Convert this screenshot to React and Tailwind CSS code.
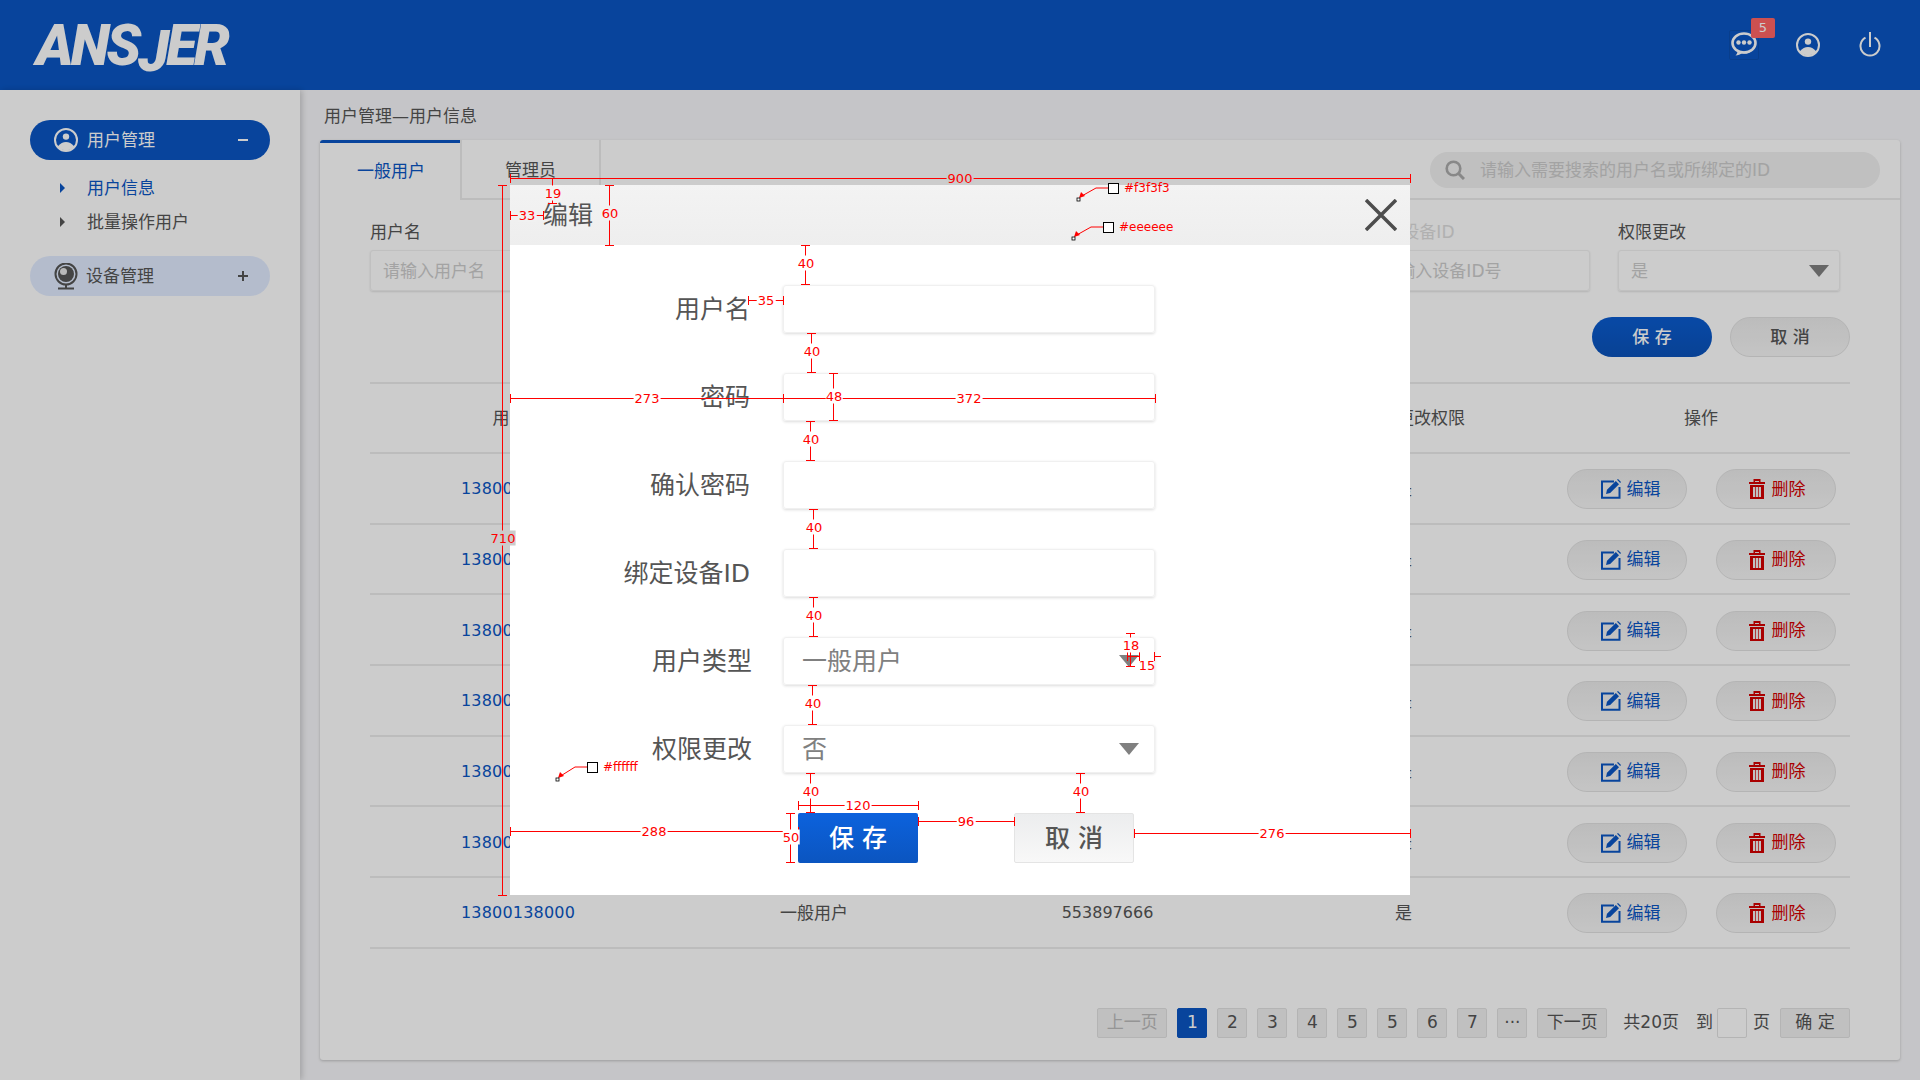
const rows = Array.from({ length: 7 }, (_, i) => ({ id: i, phone: "13800138000", type: "一般用户", device: "553897666", allowed: "是" }));

const filterFields = [
  { label: "用户名", hint: "请输入用户名" },
  { label: "密码", hint: "请输入密码" },
  { label: "确认密码", hint: "请再次输入密码" },
  { label: "用户类型", hint: "一般用户", select: true },
  { label: "绑定设备ID", hint: "请输入设备ID号", faint: true },
  { label: "权限更改", hint: "是", select: true },
];

const modalFields = [
  { label: "用户名", pad: "pr-[33px]" },
  { label: "密码", pad: "pr-[33px]" },
  { label: "确认密码", pad: "pr-[33px]" },
  { label: "绑定设备ID", pad: "pr-[33px]" },
  { label: "用户类型", pad: "pr-[31px]", value: "一般用户" },
  { label: "权限更改", pad: "pr-[31px]", value: "否" },
];

const pages = ["1", "2", "3", "4", "5", "5", "6", "7", "···"];

// redline measurements drawn over the dialog
const hDims = [
  { x1: 510, x2: 1410, y: 178, label: "900", lx: 960, bg: "bg-[#cbcbcb]" },
  { x1: 510, x2: 543, y: 215, label: "33", lx: 527, bg: "bg-[#f1f1f1]" },
  { x1: 748, x2: 783, y: 300, label: "35", lx: 766, bg: "bg-white" },
  { x1: 510, x2: 783, y: 398, label: "273", lx: 647, bg: "bg-white" },
  { x1: 783, x2: 1155, y: 398, label: "372", lx: 969, bg: "bg-white" },
  { x1: 798, x2: 918, y: 805, label: "120", lx: 858, bg: "bg-white" },
  { x1: 510, x2: 798, y: 831, label: "288", lx: 654, bg: "bg-white" },
  { x1: 918, x2: 1014, y: 821, label: "96", lx: 966, bg: "bg-white" },
  { x1: 1134, x2: 1410, y: 833, label: "276", lx: 1272, bg: "bg-white" },
  { x1: 1127, x2: 1139, y: 656, label: "", lx: 0, bg: "" },
  { x1: 1154, x2: 1161, y: 656, label: "15", lx: 1147, ly: 665, bg: "", openEnd: true },
];

const vDims = [
  { x: 502, y1: 185, y2: 895, label: "710", ly: 538, bg: "bg-[#cbcbcb]" },
  { x: 552, y1: 178, y2: 203, label: "19", ly: 193, bg: "bg-[#f3f3f3]" },
  { x: 609, y1: 185, y2: 245, label: "60", ly: 213, bg: "bg-[#f1f1f1]" },
  { x: 805, y1: 245, y2: 284, label: "40", ly: 263, bg: "bg-white" },
  { x: 811, y1: 333, y2: 372, label: "40", ly: 351, bg: "bg-white" },
  { x: 833, y1: 373, y2: 420, label: "48", ly: 396, bg: "bg-white" },
  { x: 810, y1: 421, y2: 460, label: "40", ly: 439, bg: "bg-white" },
  { x: 813, y1: 509, y2: 548, label: "40", ly: 527, bg: "bg-white" },
  { x: 813, y1: 597, y2: 636, label: "40", ly: 615, bg: "bg-white" },
  { x: 1130, y1: 633, y2: 666, label: "18", ly: 645, bg: "bg-white" },
  { x: 812, y1: 685, y2: 724, label: "40", ly: 703, bg: "bg-white" },
  { x: 810, y1: 773, y2: 812, label: "40", ly: 791, bg: "bg-white" },
  { x: 1080, y1: 773, y2: 812, label: "40", ly: 791, bg: "bg-white" },
  { x: 790, y1: 813, y2: 862, label: "50", ly: 837, bg: "bg-white" },
];

const pickers = [
  { sx: 1108, sy: 183, dx: 1078, dy: 199, text: "#f3f3f3" },
  { sx: 1103, sy: 222, dx: 1073, dy: 238, text: "#eeeeee" },
  { sx: 587, sy: 762, dx: 557, dy: 779, text: "#ffffff" },
];

function UserCircleIcon({ className }) {
  return (
    <svg viewBox="0 0 24 24" className={className} fill="none">
      <circle cx="12" cy="12" r="11" stroke="currentColor" strokeWidth="2" />
      <circle cx="12" cy="8.6" r="3.2" fill="currentColor" />
      <path d="M3.6 18.4C6.5 15.4 9 14 12 14s5.500 1.400 8.400 4.400A11 11 0 0 1 3.600 18.400Z" fill="currentColor" />
    </svg>
  );
}

function WebcamIcon() {
  return (
    <svg viewBox="0 0 24 27" className="h-[27px] w-6 text-[#555]" fill="none">
      <circle cx="12" cy="11" r="10.500" stroke="currentColor" strokeWidth="2" />
      <circle cx="12" cy="11" r="8" fill="currentColor" />
      <circle cx="9.500" cy="8.500" r="3.500" fill="#e6e6e6" />
      <rect x="11" y="21" width="2" height="4" fill="currentColor" />
      <rect x="4" y="24.500" width="16" height="2" fill="currentColor" />
    </svg>
  );
}

function ChatIcon() {
  return (
    <svg viewBox="0 0 26 26" className="h-[26px] w-[26px] text-white" fill="none">
      <ellipse cx="13" cy="11" rx="11.500" ry="9.500" stroke="currentColor" strokeWidth="2.600" />
      <circle cx="7.500" cy="10.500" r="2.200" fill="currentColor" />
      <circle cx="13" cy="10.500" r="2.200" fill="currentColor" />
      <circle cx="18.500" cy="10.500" r="2.200" fill="currentColor" />
      <path d="M4 17c3 2 5 2.500 9 2.500s6-.5 9-2.500c-2 3.500-5 4.500-8 4.500-1 0-2 0-3-.5-1.500 1.500-4 2.500-6.500 2.500 1-1 2-2.500 2-4-1-.5-1.800-1.300-2.500-2.500Z" fill="currentColor" />
    </svg>
  );
}

function PowerIcon() {
  return (
    <svg viewBox="0 0 22 26" className="h-[26px] w-[22px] text-white" fill="none" stroke="currentColor" strokeWidth="2">
      <path d="M6.500 5.700a9.500 9.500 0 1 0 9 0" />
      <path d="M11 0v15" />
    </svg>
  );
}

function SearchIcon() {
  return (
    <svg viewBox="0 0 20 20" className="h-5 w-5 text-[#aaa]" fill="none" stroke="currentColor">
      <circle cx="8.500" cy="8.500" r="6.800" strokeWidth="2.600" />
      <path d="M13.500 13.500L19 19" strokeWidth="3" />
    </svg>
  );
}

function EditIcon() {
  return (
    <svg viewBox="0 0 20 20" className="h-5 w-5 text-[#0a56c4]" fill="none">
      <path d="M13 2.500H1v16.300h17.500V8" stroke="currentColor" strokeWidth="2" />
      <path d="M5 15l1-4.200L14.800 2l3.200 3.200L9.200 14Z" fill="currentColor" />
      <path d="M16 0.800l1-.8 3 3-.8 1Z" fill="currentColor" />
    </svg>
  );
}

function TrashIcon() {
  return (
    <svg viewBox="0 0 16 20" className="h-5 w-4 text-[#d40000]" fill="currentColor">
      <rect x="0" y="3" width="16" height="2" />
      <rect x="5" y="0" width="6" height="2" />
      <rect x="4.500" y="0" width="1.500" height="3" />
      <rect x="10" y="0" width="1.500" height="3" />
      <path d="M1 6h14v14H1ZM4 8v10h2.200V8ZM9.800 8v10H12V8Z M6.900 8v10h2.200V8Z" fillRule="evenodd" />
    </svg>
  );
}

function PlusIcon() {
  return (
    <svg viewBox="0 0 10 10" className="h-2.5 w-2.5 text-[#555]" fill="currentColor">
      <rect x="0" y="4" width="10" height="2" />
      <rect x="4" y="0" width="2" height="10" />
    </svg>
  );
}

function Caret({ className }) {
  return (
    <svg viewBox="0 0 20 12" className={className}>
      <polygon points="0,0 20,0 10,12" fill="currentColor" />
    </svg>
  );
}

function Sidebar() {
  return (
    <aside className="w-[300px] shrink-0 bg-white px-[30px] pt-[30px] shadow-[2px_0_6px_rgba(0,0,0,0.18)]">
      <div className="flex h-10 items-center rounded-full bg-[#0a56c4] pl-6 pr-[22px] text-[17px] text-white">
        <UserCircleIcon className="h-6 w-6" />
        <span className="ml-[9px] flex-1 pt-0.5">用户管理</span>
        <span className="h-0.5 w-2.5 bg-white" />
      </div>
      <div className="mt-[11px] text-[17px]">
        <div className="flex h-[34px] items-center text-[#0a56c4]">
          <span className="ml-[30px] h-0 w-0 border-y-[5px] border-l-[5px] border-y-transparent border-l-current" />
          <span className="ml-[22px] pt-0.5">用户信息</span>
        </div>
        <div className="flex h-[34px] items-center text-[#555]">
          <span className="ml-[30px] h-0 w-0 border-y-[5px] border-l-[5px] border-y-transparent border-l-current" />
          <span className="ml-[22px] pt-0.5">批量操作用户</span>
        </div>
      </div>
      <div className="mt-[17px] flex h-10 items-center rounded-full bg-[#e2ecff] pl-6 pr-[22px] text-[17px] text-[#555]">
        <WebcamIcon />
        <span className="ml-2 flex-1 pt-0.5">设备管理</span>
        <PlusIcon />
      </div>
    </aside>
  );
}

function FilterForm() {
  return (
    <div className="flex justify-between pr-2.5 pt-5">
      {filterFields.map((field) => (
        <div key={field.label} className="w-[222px]">
          <div className={`h-6 text-[17px] leading-6 ${field.faint ? "text-[#ddd]" : "text-[#555]"}`}>{field.label}</div>
          <div className="mt-1.5 flex h-[41px] items-center justify-between rounded-[3px] border border-[#f0f0f0] pl-3 pr-2.5 text-[17px] text-[#ccc] shadow-[0_1px_2px_rgba(0,0,0,0.12)]">
            <span className="pt-0.5">{field.hint}</span>
            {field.select && <Caret className="h-3 w-5 text-[#808080]" />}
          </div>
        </div>
      ))}
    </div>
  );
}

function UserTable() {
  return (
    <div className="mt-[25px] border-t-2 border-[#ebebeb] text-[17px] text-[#555]">
      <div className="grid h-[70px] grid-cols-5 items-center border-b-2 border-[#ebebeb] pt-0.5 text-center">
        <span>用户名</span>
        <span>用户类型</span>
        <span>绑定设备ID</span>
        <span className="pl-[50px]">更改权限</span>
        <span className="pr-0.5">操作</span>
      </div>
      {rows.map((row) => (
        <div key={row.id} className="grid h-[70.7px] grid-cols-5 items-center border-b-2 border-[#ebebeb] pt-0.5 text-center">
          <span className="text-[16px] tracking-[0.2px] text-[#0a56c4]">{row.phone}</span>
          <span>{row.type}</span>
          <span className="pr-[5px] text-[16px]">{row.device}</span>
          <span className="pr-[5px]">{row.allowed}</span>
          <div className="flex justify-center gap-[29px] pr-0.5">
            <button className="flex h-10 w-[120px] items-center justify-center gap-1.5 rounded-full border border-[#e2e2e2] bg-gradient-to-b from-[#ececec] to-[#f6f6f6] pl-2 text-[#0a56c4]">
              <EditIcon />
              编辑
            </button>
            <button className="flex h-10 w-[120px] items-center justify-center gap-[7px] rounded-full border border-[#e2e2e2] bg-gradient-to-b from-[#ececec] to-[#f6f6f6] pl-[3px] text-[#d40000]">
              <TrashIcon />
              删除
            </button>
          </div>
        </div>
      ))}
    </div>
  );
}

function Pagination() {
  return (
    <div className="mt-[59px] flex h-[30px] items-center justify-end gap-2.5 text-[17px] text-[#555]">
      <span className="flex h-full w-[70px] items-center justify-center rounded-[2px] border border-[#e2e2e2] bg-[#f0f0f0] text-[#bbb]">上一页</span>
      {pages.map((page, i) => (
        <span
          key={i}
          className={`flex h-full w-[30px] items-center justify-center rounded-[2px] border ${
            i === 0 ? "border-[#0a56c4] bg-[#0a56c4] text-white" : "border-[#e2e2e2] bg-[#f0f0f0]"
          }`}
        >
          {page}
        </span>
      ))}
      <span className="flex h-full w-[70px] items-center justify-center rounded-[2px] border border-[#e2e2e2] bg-[#f0f0f0]">下一页</span>
      <span className="ml-1.5">共20页</span>
      <span className="ml-[7px]">到</span>
      <span className="-ml-1.5 h-full w-[30px] rounded-[2px] border border-[#e2e2e2] bg-white" />
      <span className="-ml-1">页</span>
      <span className="flex h-full w-[70px] items-center justify-center rounded-[2px] border border-[#e2e2e2] bg-[#f0f0f0]">确 定</span>
    </div>
  );
}

function EditDialog() {
  return (
    <div className="absolute left-[510px] top-[185px] h-[710px] w-[900px] bg-white">
      <div className="flex h-[60px] items-center justify-between bg-gradient-to-b from-[#f3f3f3] to-[#eeeeee] pl-[33px] pr-[13px] text-[25px] text-[#555]">
        <span className="pt-0.5">编辑</span>
        <svg viewBox="0 0 32 32" className="h-8 w-8 text-[#4d4d4d]" stroke="currentColor" strokeWidth="3.500">
          <path d="M1 1l30 30M31 1L1 31" />
        </svg>
      </div>
      <div className="flex flex-col gap-10 pt-10">
        {modalFields.map((field) => (
          <div key={field.label} className="flex items-center">
            <label className={`w-[273px] pt-0.5 text-right text-[25px] text-[#555] ${field.pad}`}>{field.label}</label>
            <div className="flex h-12 w-[372px] items-center justify-between rounded-[3px] border border-[#f0f0f0] pl-[18px] pr-[15px] text-[25px] text-[#808080] shadow-[0_1px_3px_rgba(0,0,0,0.14)]">
              <span className="pt-0.5">{field.value}</span>
              {field.value && <Caret className="h-3 w-5 text-[#808080]" />}
            </div>
          </div>
        ))}
      </div>
      <div className="mt-10 flex gap-24 pl-[288px] text-[25px]">
        <button className="h-[50px] w-[120px] rounded-[2px] bg-gradient-to-b from-[#0c62dd] to-[#0b55c0] pt-0.5 font-medium text-white">保 存</button>
        <button className="h-[50px] w-[120px] rounded-[2px] border border-[#e4e4e4] bg-gradient-to-b from-[#ecedee] to-[#f8f8f8] pt-0.5 font-medium text-[#555]">取 消</button>
      </div>
    </div>
  );
}

function Redlines() {
  return (
    <>
      {hDims.map((d, i) => (
        <div key={`h${i}`}>
          <div className="absolute h-px bg-[#ff0000]" style={{ left: d.x1, top: d.y, width: d.x2 - d.x1 }} />
          <div className="absolute h-[9px] w-px bg-[#ff0000]" style={{ left: d.x1, top: d.y - 4 }} />
          {!d.openEnd && <div className="absolute h-[9px] w-px bg-[#ff0000]" style={{ left: d.x2, top: d.y - 4 }} />}
          {d.label && (
            <span
              className={`absolute -translate-x-1/2 -translate-y-1/2 px-px text-[13px] leading-none text-[#ff0000] ${d.bg}`}
              style={{ left: d.lx, top: d.ly ?? d.y }}
            >
              {d.label}
            </span>
          )}
        </div>
      ))}
      {vDims.map((d, i) => (
        <div key={`v${i}`}>
          <div className="absolute w-px bg-[#ff0000]" style={{ left: d.x, top: d.y1, height: d.y2 - d.y1 }} />
          <div className="absolute h-px w-[9px] bg-[#ff0000]" style={{ left: d.x - 4, top: d.y1 }} />
          <div className="absolute h-px w-[9px] bg-[#ff0000]" style={{ left: d.x - 4, top: d.y2 }} />
          <span
            className={`absolute -translate-x-1/2 -translate-y-1/2 py-px text-[13px] leading-none text-[#ff0000] ${d.bg}`}
            style={{ left: d.x + 1, top: d.ly }}
          >
            {d.label}
          </span>
        </div>
      ))}
      {pickers.map((p) => (
        <div key={p.text}>
          <svg className="absolute overflow-visible" style={{ left: 0, top: 0 }} width="1" height="1">
            <polyline points={`${p.sx},${p.sy + 5} ${p.sx - 12},${p.sy + 5} ${p.dx + 2},${p.dy - 2}`} fill="none" stroke="#ff0000" />
            <polygon points={`${p.dx + 1},${p.dy - 1} ${p.dx + 7},${p.dy - 3} ${p.dx + 3},${p.dy - 7}`} fill="#ff0000" />
            <rect x={p.dx - 1} y={p.dy - 1} width="3" height="3" fill="#fff" stroke="#000" strokeWidth="0.800" />
          </svg>
          <div className="absolute h-[11px] w-[11px] border border-black bg-white" style={{ left: p.sx, top: p.sy }} />
          <span className="absolute text-[12px] leading-none text-[#ff0000]" style={{ left: p.sx + 16, top: p.sy - 1 }}>
            {p.text}
          </span>
        </div>
      ))}
    </>
  );
}

export default function App() {
  return (
    <div className="relative h-[1080px] w-[1920px] overflow-hidden bg-[#f7f7fa] font-['DejaVu_Sans','Noto_Sans_CJK_SC',sans-serif]">
      <header className="flex h-[90px] items-center justify-between bg-[#0a56c4] pl-9 pr-[39px] text-white">
        <div className="font-['Roboto',sans-serif] text-[57px] font-black italic leading-none tracking-[-3px]">
          ANS<span className="inline-block translate-y-1.5">J</span>ER
        </div>
        <div className="flex items-center">
          <div className="relative flex h-[30px] w-[30px] items-center justify-center rounded-[2px] border border-[#0a4eb0]">
            <ChatIcon />
            <span className="absolute -top-[13px] left-[21px] flex h-5 w-6 items-center justify-center rounded-[2px] bg-[#ff6464] text-[13px]">5</span>
          </div>
          <UserCircleIcon className="ml-[37px] h-6 w-6" />
          <div className="ml-[39px]">
            <PowerIcon />
          </div>
        </div>
      </header>

      <div className="flex h-[990px]">
        <Sidebar />
        <main className="flex-1 pl-5 pr-5">
          <div className="flex h-[50px] items-center pl-1 pt-1 text-[17px] text-[#555]">用户管理—用户信息</div>
          <section className="h-[920px] rounded-[3px] bg-white shadow-[0_1px_3px_rgba(0,0,0,0.22)]">
            <div className="flex h-[60px] items-stretch border-b-2 border-[#ebebeb] text-[17px]">
              <div className="-mb-0.5 flex w-[140px] items-center justify-center rounded-tl-[3px] border-t-[3px] border-[#0a56c4] bg-white pl-0.5 text-[#0a56c4]">一般用户</div>
              <div className="flex w-[141px] items-center justify-center border-x-2 border-[#ebebeb] pt-1 text-[#555]">管理员</div>
              <div className="ml-auto mr-5 mt-3 flex h-9 w-[450px] items-center rounded-full bg-[#f0f0f0] pl-[15px] text-[17px] text-[#ccc]">
                <SearchIcon />
                <span className="ml-[15px] pt-0.5">请输入需要搜索的用户名或所绑定的ID</span>
              </div>
            </div>
            <div className="px-[50px]">
              <FilterForm />
              <div className="mt-[26px] flex justify-end gap-[18px] text-[17px] font-medium">
                <button className="h-10 w-[120px] rounded-full bg-gradient-to-b from-[#0a5cd0] to-[#0a52ba] pt-0.5 text-white">保 存</button>
                <button className="h-10 w-[120px] rounded-full border border-[#e2e2e2] bg-gradient-to-b from-[#ececec] to-[#f6f6f6] pt-0.5 text-[#555]">取 消</button>
              </div>
              <UserTable />
              <Pagination />
            </div>
          </section>
        </main>
      </div>

      <div className="absolute inset-0 bg-black/20" />
      <EditDialog />
      <Redlines />
    </div>
  );
}
